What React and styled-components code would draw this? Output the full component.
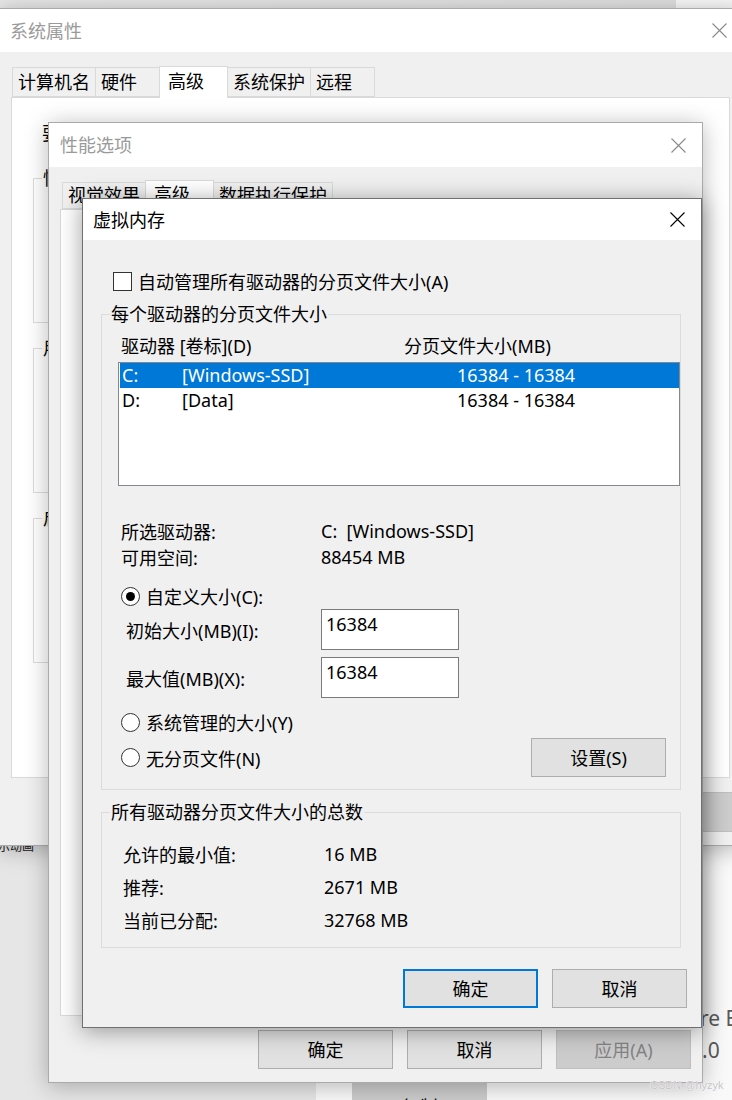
import React from "react";
import styled, { createGlobalStyle } from "styled-components";

const GlobalStyle = createGlobalStyle`
  html, body { margin: 0; padding: 0; }
  body {
    font-family: "Noto Sans", "Noto Sans CJK SC", sans-serif;
    font-size: 18px;
    color: #000;
    background: #f8f8f8;
  }
  * { box-sizing: border-box; }
`;

const Desktop = styled.div`
  position: relative;
  width: 732px;
  height: 1100px;
  overflow: hidden;
  background: #f9f9f9;
`;

/* ---------- background applications (desktop canvas) ---------- */
const BackTopWindow = styled.div`
  position: absolute;
  left: 0;
  top: 0;
  width: 676px;
  height: 30px;
  background: linear-gradient(to right, #e8e8e8, #e0e0e0);
`;

const BackSidebar = styled.div`
  position: absolute;
  left: 0;
  top: 830px;
  width: 316px;
  height: 270px;
  background: #e6e6e6;
`;

const SidebarText = styled.div`
  position: absolute;
  left: -14px;
  top: 840px;
  font-size: 12px;
  line-height: 12px;
  color: #222;
  font-family: "Noto Sans CJK SC", sans-serif;
`;

const BackButton = styled.div`
  position: absolute;
  left: 352px;
  top: 1083px;
  width: 135px;
  height: 40px;
  background: #cccccc;
  display: flex;
  align-items: center;
  justify-content: center;
  padding-top: 6px;
`;

const BackText = styled.div`
  position: absolute;
  left: ${(p) => p.$x}px;
  top: ${(p) => p.$y}px;
  font-family: "Noto Sans", sans-serif;
  font-size: 21px;
  line-height: 24px;
  color: #5a5a5a;
  white-space: nowrap;
`;

const Watermark = styled.div`
  position: absolute;
  left: 650px;
  top: 1078px;
  z-index: 10;
  font-family: "Liberation Sans", sans-serif;
  font-size: 11px;
  line-height: 14px;
  color: #c4c4c4;
  text-shadow: 0 0 1px #fff, 0 0 1px #fff;
`;

/* ---------- windows ---------- */
const Window = styled.section`
  position: absolute;
  left: ${(p) => p.$x}px;
  top: ${(p) => p.$y}px;
  width: ${(p) => p.$w}px;
  height: ${(p) => p.$h}px;
  z-index: ${(p) => p.$z};
  display: flex;
  flex-direction: column;
  background: #f0f0f0;
  border: 1px solid ${(p) => (p.$active ? "#707070" : "#aaaaaa")};
  box-shadow: 0 3px 22px rgba(0, 0, 0, ${(p) => (p.$active ? 0.38 : 0.28)});
`;

const TitleBar = styled.header`
  flex: 0 0 ${(p) => p.$h}px;
  display: flex;
  align-items: center;
  justify-content: space-between;
  padding-left: ${(p) => p.$pad}px;
  background: #fff;
  color: ${(p) => (p.$active ? "#000" : "#9a9a9a")};
  line-height: 24px;
`;

const CloseButton = styled.span`
  width: 48px;
  align-self: stretch;
  display: flex;
  align-items: center;
  justify-content: center;
`;

const CloseIcon = ({ color }) => (
  <svg width="15" height="15" viewBox="0 0 15 15">
    <path d="M0.5 0.5L14.5 14.5M14.5 0.5L0.5 14.5" stroke={color} strokeWidth="1.1" fill="none" />
  </svg>
);

const WindowBody = styled.div`
  flex: 1;
  display: flex;
  flex-direction: column;
  padding: ${(p) => p.$pad};
`;

/* ---------- tabs ---------- */
const TabStrip = styled.div`
  display: flex;
  align-items: flex-end;
  height: ${(p) => p.$h}px;
  padding-left: ${(p) => p.$indent}px;
  position: relative;
  z-index: 1;
`;

const Tab = styled.div`
  min-width: ${(p) => (p.$sel ? 69 : 65)}px;
  padding: 0 5px 0 ${(p) => (p.$sel ? 8 : 5)}px;
  line-height: ${(p) => p.$h - 2}px;
  white-space: nowrap;
  background: ${(p) => (p.$sel ? "#fff" : "#f0f0f0")};
  border: 1px solid #d9d9d9;
  border-bottom: ${(p) => (p.$sel ? "none" : "1px solid #d9d9d9")};
  margin-left: -1px;
  margin-bottom: ${(p) => (p.$sel ? "-1px" : "0")};
  height: ${(p) => (p.$sel ? p.$h + 1 : p.$h)}px;
  ${(p) => (p.$sel ? "z-index: 2;" : "")}
`;

const TabPanel = styled.div`
  background: #fff;
  border: 1px solid #d9d9d9;
  height: ${(p) => p.$h}px;
  margin-right: ${(p) => p.$mr}px;
  padding: ${(p) => p.$pad};
  display: flex;
  flex-direction: column;
`;

/* ---------- controls ---------- */
const ButtonRow = styled.div`
  display: flex;
  justify-content: flex-end;
  gap: 14px;
  margin-top: ${(p) => p.$mt}px;
  margin-right: ${(p) => p.$mr}px;
`;

const Button = styled.div`
  width: 135px;
  height: ${(p) => p.$h || 39}px;
  display: flex;
  align-items: center;
  justify-content: center;
  background: ${(p) => (p.$disabled ? "#cccccc" : "#e1e1e1")};
  color: ${(p) => (p.$disabled ? "#838383" : "#000")};
  border: ${(p) =>
    p.$default ? "2px solid #0078d7" : p.$disabled ? "1px solid #bfbfbf" : "1px solid #adadad"};
  line-height: 24px;
  white-space: nowrap;
`;

const GroupBox = styled.fieldset`
  margin: ${(p) => p.$m || "0"};
  padding: 0;
  min-width: 0;
  border: 1px solid #dcdcdc;
  ${(p) => (p.$h ? `height: ${p.$h}px;` : "")}
`;

const Legend = styled.legend`
  margin-left: 8px;
  padding: 0 1px;
  line-height: 24px;
  height: 24px;
`;

const GroupInner = styled.div`
  display: flex;
  flex-direction: column;
  padding: ${(p) => p.$pad};
`;

const CheckRow = styled.label`
  display: flex;
  align-items: center;
  gap: 6px;
  height: 26px;
  margin-left: 12px;
`;

const CheckBox = styled.span`
  width: 19px;
  height: 19px;
  border: 1px solid #333;
  background: #fff;
`;

const ColumnHeader = styled.div`
  display: grid;
  grid-template-columns: 283px 1fr;
  padding-left: 3px;
  line-height: 24px;
`;

const ListBox = styled.div`
  margin-top: 4px;
  height: 124px;
  background: #fff;
  border: 1px solid #828790;
  padding-left: 1px;
`;

const ListRow = styled.div`
  display: grid;
  grid-template-columns: 60px 275px 1fr;
  height: 25px;
  line-height: 25px;
  padding-left: 2px;
  white-space: nowrap;
  background: ${(p) => (p.$sel ? "#0078d7" : "transparent")};
  color: ${(p) => (p.$sel ? "#fff" : "#000")};
`;

const InfoGrid = styled.div`
  display: grid;
  grid-template-columns: ${(p) => p.$col}px 1fr;
  grid-auto-rows: ${(p) => p.$row}px;
  align-items: center;
  padding-left: ${(p) => p.$indent}px;
  margin-top: ${(p) => p.$mt || 0}px;
  white-space: nowrap;
`;

const RadioRow = styled.div`
  display: flex;
  align-items: center;
  justify-content: space-between;
  height: ${(p) => p.$h || 26}px;
  margin-top: ${(p) => p.$mt}px;
  padding: 0 14px 0 3px;
`;

const RadioLabel = styled.label`
  display: flex;
  align-items: center;
  gap: 6px;
  white-space: nowrap;
`;

const Radio = styled.span`
  width: 19px;
  height: 19px;
  border-radius: 50%;
  border: 1px solid #333;
  background: #fff;
  display: flex;
  align-items: center;
  justify-content: center;
  &::after {
    content: "";
    width: 9px;
    height: 9px;
    border-radius: 50%;
    background: ${(p) => (p.$checked ? "#000" : "transparent")};
  }
`;

const SizeRow = styled.div`
  display: grid;
  grid-template-columns: 200px 138px;
  align-items: center;
  margin-top: ${(p) => p.$mt}px;
  padding-left: 3px;
`;

const SizeLabel = styled.span`
  padding-left: 5px;
  line-height: 24px;
  padding-top: 3px;
`;

const EditBox = styled.div`
  height: 41px;
  background: #fff;
  border: 1px solid #7a7a7a;
  padding: 2px 4px;
  line-height: 24px;
`;

const IntroText = styled.div`
  line-height: 24px;
  margin-left: 9px;
  white-space: nowrap;
`;

const GroupText = styled.div`
  padding: 10px 0 0 30px;
  line-height: 24px;
  white-space: nowrap;
`;

export default function App() {
  return (
    <>
      <GlobalStyle />
      <Desktop>
        <BackTopWindow />
        <BackSidebar />
        <SidebarText>显示动画</SidebarText>
        <BackButton>复制</BackButton>
        <BackText $x={700} $y={1006}>re E</BackText>
        <BackText $x={690} $y={1038}>1.0</BackText>

        {/* 系统属性 */}
        <Window $x={-1} $y={8} $w={745} $h={838} $z={1}>
          <TitleBar $h={43} $pad={10}>
            <span>系统属性</span>
            <CloseButton>
              <CloseIcon color="#8a8a8a" />
            </CloseButton>
          </TitleBar>
          <WindowBody $pad="13px 6px 13px 11px">
            <TabStrip $h={32} $indent={2}>
              <Tab $h={30}>计算机名</Tab>
              <Tab $h={30}>硬件</Tab>
              <Tab $h={31} $sel>高级</Tab>
              <Tab $h={30}>系统保护</Tab>
              <Tab $h={30}>远程</Tab>
            </TabStrip>
            <TabPanel $h={681} $mr={7} $pad="23px 40px 0 21px">
              <IntroText>要进行大多数更改，你必须作为管理员登录。</IntroText>
              <GroupBox $m="21px 0 0 0" $h={157}>
                <Legend>性能</Legend>
                <GroupText>视觉效果，处理器计划，内存使用，以及虚拟内存</GroupText>
              </GroupBox>
              <GroupBox $m="13px 0 0 0" $h={157}>
                <Legend>用户配置文件</Legend>
                <GroupText>与登录帐户相关的桌面设置</GroupText>
              </GroupBox>
              <GroupBox $m="13px 0 0 0" $h={157}>
                <Legend>启动和故障恢复</Legend>
                <GroupText>系统启动、系统故障和调试信息</GroupText>
              </GroupBox>
            </TabPanel>
            <ButtonRow $mt={14} $mr={0}>
              <Button $h={40}>确定</Button>
              <Button $h={40}>取消</Button>
              <Button $h={40} $disabled>
                应用(A)
              </Button>
            </ButtonRow>
          </WindowBody>
        </Window>

        {/* 性能选项 */}
        <Window $x={48} $y={122} $w={655} $h={961} $z={2}>
          <TitleBar $h={44} $pad={11}>
            <span>性能选项</span>
            <CloseButton>
              <CloseIcon color="#8a8a8a" />
            </CloseButton>
          </TitleBar>
          <WindowBody $pad="12px 11px 13px 11px">
            <TabStrip $h={30} $indent={3}>
              <Tab $h={27}>视觉效果</Tab>
              <Tab $h={29} $sel>
                高级
              </Tab>
              <Tab $h={27}>数据执行保护</Tab>
            </TabStrip>
            <TabPanel $h={807} $mr={0} $pad="0" />
            <ButtonRow $mt={14} $mr={0}>
              <Button>确定</Button>
              <Button>取消</Button>
              <Button $disabled>应用(A)</Button>
            </ButtonRow>
          </WindowBody>
        </Window>

        {/* 虚拟内存 */}
        <Window $x={82} $y={198} $w={620} $h={830} $z={3} $active>
          <TitleBar $h={41} $pad={10} $active>
            <span>虚拟内存</span>
            <CloseButton>
              <CloseIcon color="#000" />
            </CloseButton>
          </TitleBar>
          <WindowBody $pad="28px 20px 19px 18px">
            <CheckRow>
              <CheckBox />
              <span>自动管理所有驱动器的分页文件大小(A)</span>
            </CheckRow>

            <GroupBox $m="8px 0 0 0">
              <Legend>每个驱动器的分页文件大小</Legend>
              <GroupInner $pad="8px 0 12px 16px">
                <ColumnHeader>
                  <span>驱动器 [卷标](D)</span>
                  <span>分页文件大小(MB)</span>
                </ColumnHeader>
                <ListBox>
                  <ListRow $sel>
                    <span>C:</span>
                    <span>[Windows-SSD]</span>
                    <span>16384 - 16384</span>
                  </ListRow>
                  <ListRow>
                    <span>D:</span>
                    <span>[Data]</span>
                    <span>16384 - 16384</span>
                  </ListRow>
                </ListBox>

                <InfoGrid $col={200} $row={26} $indent={3} $mt={32}>
                  <span>所选驱动器:</span>
                  <span>C:&nbsp;&nbsp;[Windows-SSD]</span>
                  <span>可用空间:</span>
                  <span>88454 MB</span>
                </InfoGrid>

                <RadioRow $mt={13}>
                  <RadioLabel>
                    <Radio $checked />
                    <span>自定义大小(C):</span>
                  </RadioLabel>
                </RadioRow>
                <SizeRow $mt={0}>
                  <SizeLabel>初始大小(MB)(I):</SizeLabel>
                  <EditBox>16384</EditBox>
                </SizeRow>
                <SizeRow $mt={7}>
                  <SizeLabel>最大值(MB)(X):</SizeLabel>
                  <EditBox>16384</EditBox>
                </SizeRow>
                <RadioRow $mt={11}>
                  <RadioLabel>
                    <Radio />
                    <span>系统管理的大小(Y)</span>
                  </RadioLabel>
                </RadioRow>
                <RadioRow $mt={3} $h={39}>
                  <RadioLabel>
                    <Radio />
                    <span>无分页文件(N)</span>
                  </RadioLabel>
                  <Button>设置(S)</Button>
                </RadioRow>
              </GroupInner>
            </GroupBox>

            <GroupBox $m="10px 0 0 0">
              <Legend>所有驱动器分页文件大小的总数</Legend>
              <GroupInner $pad="13px 0 11px 0">
                <InfoGrid $col={201} $row={33} $indent={21}>
                  <span>允许的最小值:</span>
                  <span>16 MB</span>
                  <span>推荐:</span>
                  <span>2671 MB</span>
                  <span>当前已分配:</span>
                  <span>32768 MB</span>
                </InfoGrid>
              </GroupInner>
            </GroupBox>

            <ButtonRow $mt={21} $mr={-6}>
              <Button $default>确定</Button>
              <Button>取消</Button>
            </ButtonRow>
          </WindowBody>
        </Window>

        <Watermark>CSDN @hyzyk</Watermark>
      </Desktop>
    </>
  );
}
